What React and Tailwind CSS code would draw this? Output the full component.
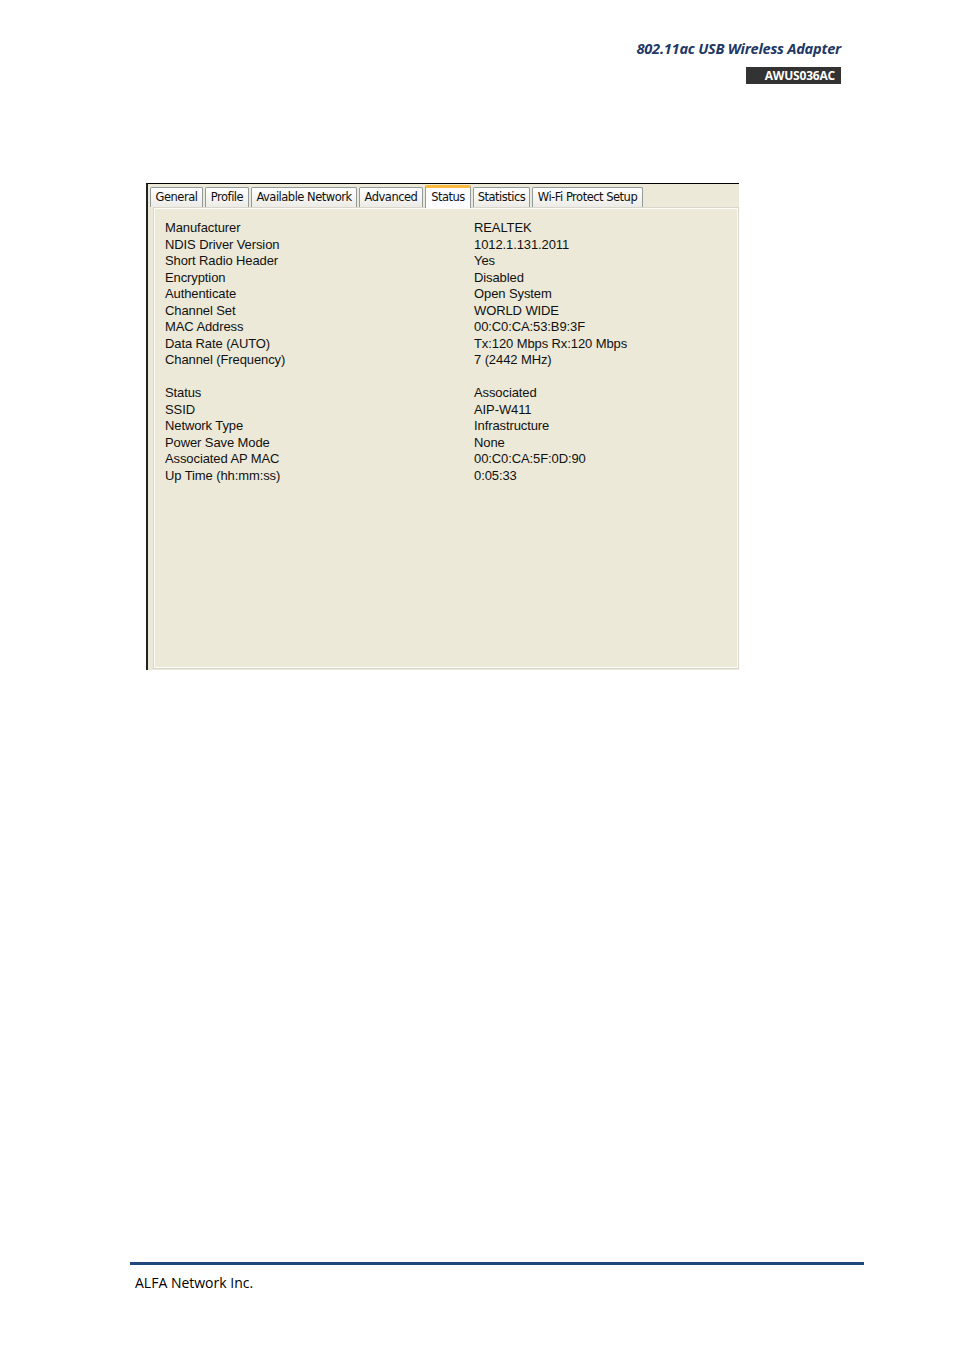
import React from 'react'

const tabs = [
  { label: 'General', w: 'w-[53px]' },
  { label: 'Profile', w: 'w-[44px]' },
  { label: 'Available Network', w: 'w-[106px]' },
  { label: 'Advanced', w: 'w-[64px]' },
  { label: 'Status', w: 'w-[46px]', active: true },
  { label: 'Statistics', w: 'w-[57px]' },
  { label: 'Wi-Fi Protect Setup', w: 'w-[111px]' },
]

const rows = [
  ['Manufacturer', 'REALTEK'],
  ['NDIS Driver Version', '1012.1.131.2011'],
  ['Short Radio Header', 'Yes'],
  ['Encryption', 'Disabled'],
  ['Authenticate', 'Open System'],
  ['Channel Set', 'WORLD WIDE'],
  ['MAC Address', '00:C0:CA:53:B9:3F'],
  ['Data Rate (AUTO)', 'Tx:120 Mbps Rx:120 Mbps'],
  ['Channel (Frequency)', '7 (2442 MHz)'],
  null,
  ['Status', 'Associated'],
  ['SSID', 'AIP-W411'],
  ['Network Type', 'Infrastructure'],
  ['Power Save Mode', 'None'],
  ['Associated AP MAC', '00:C0:CA:5F:0D:90'],
  ['Up Time (hh:mm:ss)', '0:05:33'],
]

function Tab({ label, w, active }) {
  if (active) {
    return (
      <div className={`${w} h-[23px] -mb-[1px] relative z-10 bg-[#fcfcfe] border border-[#919b9c] border-b-0 border-t-[3px] border-t-[#f8b93c] rounded-t-[2px] flex items-start justify-center pt-[1px]`}>
        {label}
      </div>
    )
  }
  return (
    <div className={`${w} h-[20px] bg-gradient-to-b from-white to-[#ecebe6] border border-[#919b9c] border-b-0 rounded-t-[2px] flex items-center justify-center`}>
      {label}
    </div>
  )
}

export default function App() {
  return (
    <div className="w-[954px] h-[1350px] bg-white relative font-['Liberation_Sans',Arial,sans-serif] text-black">
      {/* page header */}
      <div className="pt-[38px] pr-[113px] flex flex-col items-end">
        <div className="font-['Open_Sans',sans-serif] italic font-bold text-[14.6px] leading-[21px] text-[#1f3864] tracking-[-0.25px]">
          802.11ac USB Wireless Adapter
        </div>
        <div className="mt-[8px] w-[95px] h-[17px] bg-[#333333] text-white font-['Open_Sans',sans-serif] font-bold text-[12px] leading-[17px] text-right pr-[6px] tracking-[-0.2px]">
          AWUS036AC
        </div>
      </div>

      {/* screenshot of the utility */}
      <div className="ml-[146px] mt-[99px] w-[593px] h-[487px] border-t border-t-black border-l-2 border-l-[#222] bg-[#ece9d8] flex flex-col">
        <div className="h-[23px] flex items-end gap-[2px] pl-[2px] text-[11.5px] text-[#111] font-['DejaVu_Sans',sans-serif] tracking-[-0.5px] bg-[#ece9d8]">
          {tabs.map(t => (
            <Tab key={t.label} {...t} />
          ))}
        </div>
        <div className="ml-[5px] h-[462px] border border-[#d9d7cd] bg-[#fbfbf8] p-[1px]">
          <div className="w-full h-full bg-[#ece9d8] pt-[11px] pl-[10px] text-[13px] leading-[16.5px] tracking-[-0.1px] text-[#111]">
            {rows.map((r, i) =>
              r ? (
                <div key={i} className="flex">
                  <div className="w-[309px]">{r[0]}</div>
                  <div>{r[1]}</div>
                </div>
              ) : (
                <div key={i} className="h-[16.5px]" />
              )
            )}
          </div>
        </div>
      </div>

      {/* footer */}
      <div className="absolute left-[130px] top-[1262px] w-[734px]">
        <div className="h-[3px] bg-[#1f497d]" />
        <div className="pl-[5px] pt-[9px] font-['Open_Sans',sans-serif] text-[14px] leading-[18px]">
          ALFA Network Inc.
        </div>
      </div>
    </div>
  )
}
